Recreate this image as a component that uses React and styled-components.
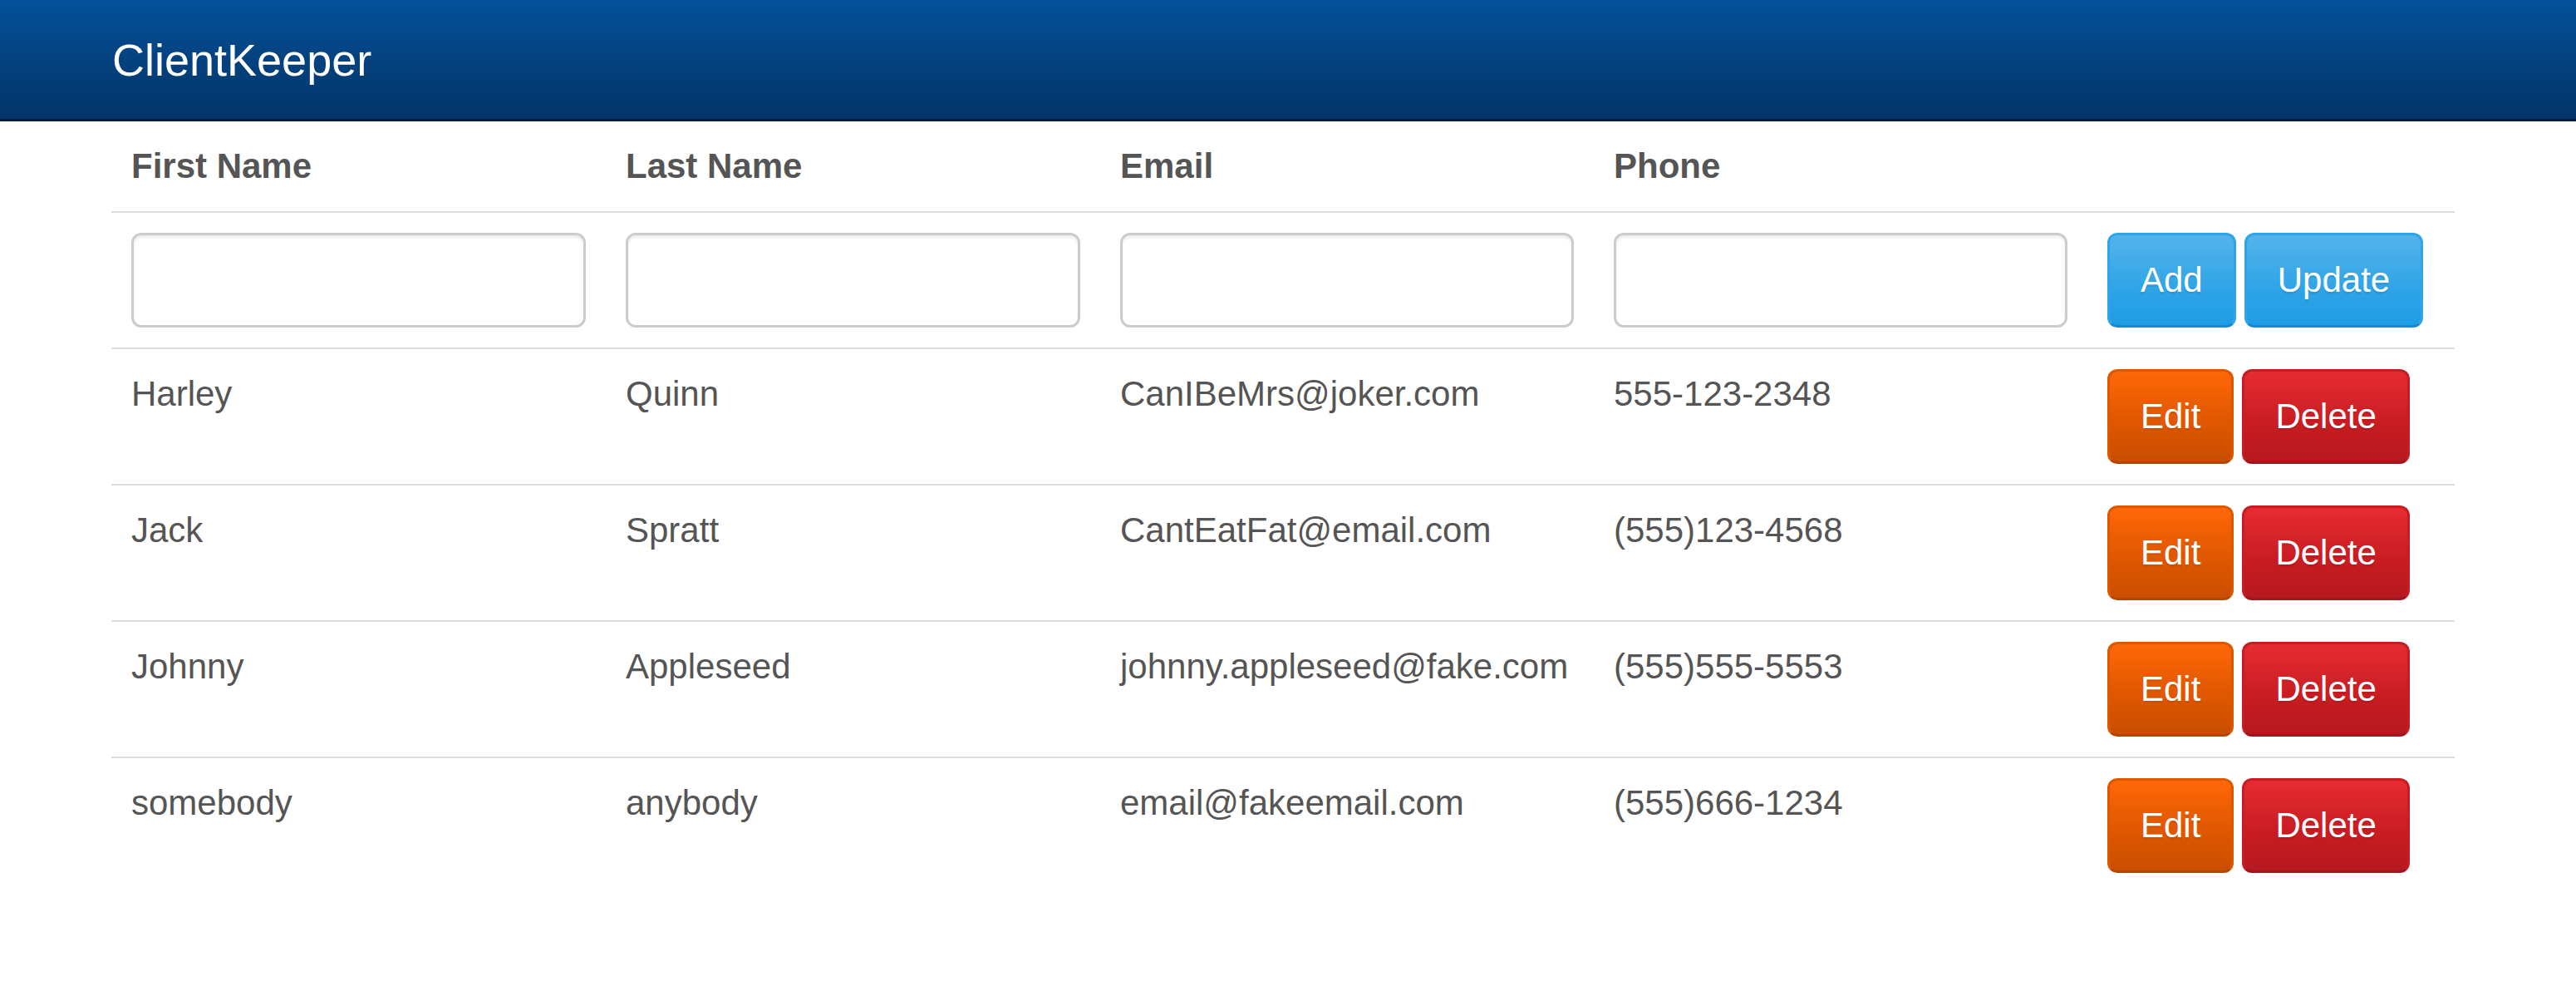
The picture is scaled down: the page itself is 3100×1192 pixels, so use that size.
import React from "react";
import styled, { createGlobalStyle } from "styled-components";

const GlobalStyle = createGlobalStyle`
  html, body {
    margin: 0;
    padding: 0;
    background: #ffffff;
  }
  body {
    font-family: "Liberation Sans", Arial, Helvetica, sans-serif;
    font-size: 42px;
    line-height: 60px;
    color: #555555;
  }
  * { box-sizing: border-box; }
`;

const Page = styled.div`
  padding-right: 12px;
`;

const Navbar = styled.header`
  height: 146px;
  margin-right: -12px;
  background-image: linear-gradient(#04519b, #033f7a 60%, #02346a);
  border-bottom: 3px solid #011f3d;
`;

const Container = styled.div`
  width: 2820px;
  margin: 0 auto;
`;

const NavInner = styled(Container)`
  height: 143px;
  display: flex;
  align-items: center;
`;

const Brand = styled.a`
  margin-left: -5px;
  font-size: 54px;
  line-height: 60px;
  color: #ffffff;
  text-decoration: none;
`;

const Table = styled.table`
  width: 100%;
  border-collapse: collapse;
  border-spacing: 0;
  table-layout: fixed;
`;

const Col = styled.col`
  width: ${(p) => p.$w};
`;

const Th = styled.th`
  text-align: left;
  font-weight: bold;
  vertical-align: bottom;
  padding: 24px;
  line-height: 60px;
  border-bottom: 2px solid #dddddd;
`;

const Td = styled.td`
  vertical-align: top;
  padding: 24px;
  line-height: 60px;
  border-top: ${(p) => (p.$first ? "none" : "2px solid #dddddd")};
  white-space: nowrap;
`;

const Input = styled.input`
  display: block;
  width: 100%;
  height: 114px;
  padding: 18px 36px;
  font: inherit;
  color: #555555;
  background: #ffffff;
  border: 3px solid #cccccc;
  border-radius: 12px;
  box-shadow: inset 0 3px 3px rgba(0, 0, 0, 0.075);
  outline: none;
`;

const Actions = styled.div`
  display: flex;
  gap: 10px;
`;

const variants = {
  primary: {
    bg: "linear-gradient(#54b4eb, #2fa4e7 60%, #1d9ce5)",
    border: "#2fa4e7",
    bottom: "#178acc",
  },
  warning: {
    bg: "linear-gradient(#ff6707, #dd5600 60%, #c94e00)",
    border: "#dd5600",
    bottom: "#b44600",
  },
  danger: {
    bg: "linear-gradient(#e72b33, #c71c22 60%, #b5191f)",
    border: "#c71c22",
    bottom: "#a1161c",
  },
};

const Button = styled.button`
  display: inline-block;
  height: 114px;
  padding: 24px 37px;
  font-family: inherit;
  font-size: 42px;
  line-height: 60px;
  color: #ffffff;
  text-shadow: 0 3px 0 rgba(0, 0, 0, 0.08);
  background-image: ${(p) => variants[p.$variant].bg};
  border: 3px solid ${(p) => variants[p.$variant].border};
  border-bottom-color: ${(p) => variants[p.$variant].bottom};
  border-radius: 12px;
  cursor: pointer;
  white-space: nowrap;
`;

const clients = [
  { first: "Harley", last: "Quinn", email: "CanIBeMrs@joker.com", phone: "555-123-2348" },
  { first: "Jack", last: "Spratt", email: "CantEatFat@email.com", phone: "(555)123-4568" },
  { first: "Johnny", last: "Appleseed", email: "johnny.appleseed@fake.com", phone: "(555)555-5553" },
  { first: "somebody", last: "anybody", email: "email@fakeemail.com", phone: "(555)666-1234" },
];

export default function App() {
  return (
    <Page>
      <GlobalStyle />
      <Navbar>
        <NavInner>
          <Brand href="#">ClientKeeper</Brand>
        </NavInner>
      </Navbar>
      <Container>
        <Table>
          <colgroup>
            <Col $w="595px" />
            <Col $w="595px" />
            <Col $w="594px" />
            <Col $w="594px" />
            <Col $w="442px" />
          </colgroup>
          <thead>
            <tr>
              <Th>First Name</Th>
              <Th>Last Name</Th>
              <Th>Email</Th>
              <Th>Phone</Th>
              <Th />
            </tr>
          </thead>
          <tbody>
            <tr>
              <Td $first>
                <Input type="text" />
              </Td>
              <Td $first>
                <Input type="text" />
              </Td>
              <Td $first>
                <Input type="text" />
              </Td>
              <Td $first>
                <Input type="text" />
              </Td>
              <Td $first>
                <Actions>
                  <Button $variant="primary">Add</Button>
                  <Button $variant="primary">Update</Button>
                </Actions>
              </Td>
            </tr>
            {clients.map((c) => (
              <tr key={c.email}>
                <Td>{c.first}</Td>
                <Td>{c.last}</Td>
                <Td>{c.email}</Td>
                <Td>{c.phone}</Td>
                <Td>
                  <Actions>
                    <Button $variant="warning">Edit</Button>
                    <Button $variant="danger">Delete</Button>
                  </Actions>
                </Td>
              </tr>
            ))}
          </tbody>
        </Table>
      </Container>
    </Page>
  );
}
